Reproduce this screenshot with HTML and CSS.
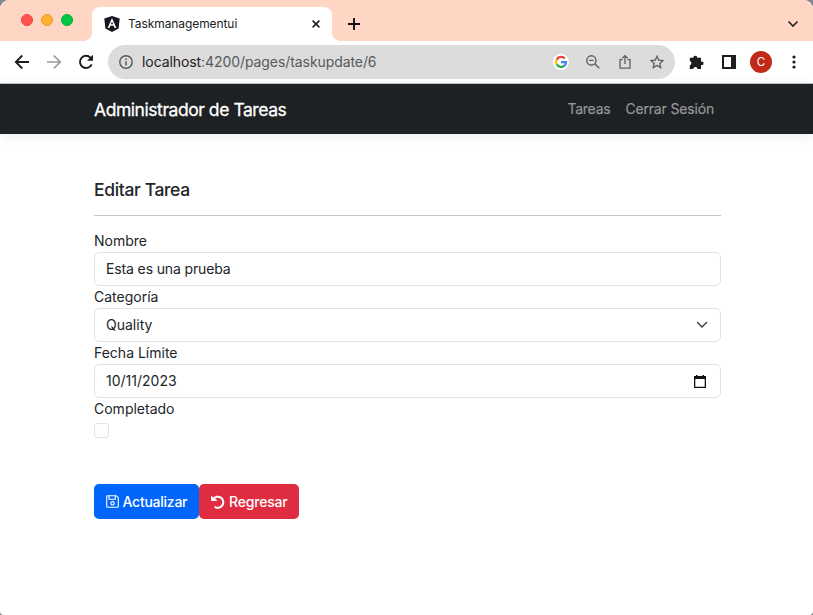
FILE: index.html
```
<!DOCTYPE html>
<html lang="es">
<head>
<meta charset="utf-8">
<title>Taskmanagementui</title>
<link rel="stylesheet" href="styles.css">
</head>
<body>
<div class="window">
  <header class="tabstrip">
    <div class="lights"><i class="light red"></i><i class="light amber"></i><i class="light green"></i></div>
    <div class="tab">
      <svg class="favicon" width="16" height="16" viewBox="0 0 16 16"><path d="M8 0l7.700 2.600-1.100 10L8 16l-6.600-3.400L.3 2.600z" fill="#14191f"/><path d="M8 2L3.600 12h1.800l.9-2.200h3.400l.9 2.200h1.800zM8 5.400l1.100 2.900H6.900z" fill="#fff" fill-rule="evenodd"/></svg>
      <span class="tab-title">Taskmanagementui</span>
      <svg class="close" width="8" height="8" viewBox="0 0 8 8"><path d="M.6.6l6.800 6.800M7.400.6L.6 7.400" stroke="#202124" stroke-width="1.600"/></svg>
    </div>
    <svg class="plus" width="12" height="12" viewBox="0 0 12 12"><path d="M6 0v12M0 6h12" stroke="#111" stroke-width="1.900"/></svg>
    <svg class="tab-menu" width="12" height="8" viewBox="0 0 12 8"><path d="M1.500 1.500L6 6l4.500-4.500" fill="none" stroke="#26211f" stroke-width="1.700"/></svg>
  </header>
  <div class="toolbar">
    <svg class="nav-icon" width="16" height="16" viewBox="0 0 16 16"><path d="M15 8H2M8.300 1.500L1.800 8l6.500 6.500" fill="none" stroke="#1c1d1f" stroke-width="1.800"/></svg>
    <svg class="nav-icon" width="16" height="16" viewBox="0 0 16 16"><path d="M1 8h13M7.700 1.500L14.200 8l-6.500 6.500" fill="none" stroke="#999" stroke-width="1.700"/></svg>
    <svg class="nav-icon" width="16" height="16" viewBox="0 0 16 16"><path d="M13.700 10.300A6.100 6.100 0 1 1 12.500 3.700L14 5.300" fill="none" stroke="#1c1d1f" stroke-width="1.900"/><path d="M15 .8v6H9z" fill="#1c1d1f"/></svg>
    <div class="address">
      <svg width="14" height="14" viewBox="0 0 14 14"><circle cx="7" cy="7" r="6.200" fill="none" stroke="#55565a" stroke-width="1.400"/><path d="M7 6.200v4.300M7 3.400v1.500" stroke="#55565a" stroke-width="1.500"/></svg>
      <span class="url">localhost<span class="path">:4200/pages/taskupdate/6</span></span>
      <svg class="google" width="16" height="16" viewBox="0 0 16 16"><circle cx="8" cy="8" r="8" fill="#fff"/><g fill="none" stroke-width="2.300"><path d="M11.800 4.600A5 5 0 0 0 3.600 5.700" stroke="#ea4335"/><path d="M3.600 5.700a5 5 0 0 0 0 4.600" stroke="#fbbc05"/><path d="M3.600 10.300a5 5 0 0 0 7.800 1.400" stroke="#34a853"/><path d="M11.400 11.700A5 5 0 0 0 12.900 8.200H8" stroke="#4285f4"/></g></svg>
      <svg class="bar-icon" width="14" height="14" viewBox="0 0 14 14"><g fill="none" stroke="#5f6063" stroke-width="1.400"><circle cx="5.400" cy="5.400" r="4.600"/><path d="M8.700 8.700l4.600 4.600M3.200 5.400h4.400"/></g></svg>
      <svg class="bar-icon" width="14" height="16" viewBox="0 0 14 16"><path d="M4.500 5.600H2v8.600h10V5.600H9.500M7 10V1.800M4.300 4.300L7 1.600l2.700 2.700" fill="none" stroke="#5f6063" stroke-width="1.300"/></svg>
      <svg class="bar-icon" width="14" height="14" viewBox="0 0 14 14"><path d="M7 1.200l1.700 3.900 4.300.4-3.200 2.900.9 4.200L7 10.400l-3.700 2.200.9-4.200L1 5.500l4.300-.4z" fill="none" stroke="#5f6063" stroke-width="1.300"/></svg>
    </div>
    <svg class="puzzle" width="15" height="15" viewBox="0 0 15 15"><path d="M4.300 2.700a2 2 0 0 1 4 0H12v3.700h.7a1.900 1.900 0 0 1 0 3.800H12V14H8.500a2.100 2.100 0 0 0-4.200 0H.8v-3.800a2.100 2.100 0 0 0 0-4.100V2.700z" fill="#1c1d1f"/></svg>
    <svg class="panel-icon" width="14" height="14" viewBox="0 0 14 14"><path d="M0 0h14v14H0zM2 2v10h7V2z" fill="#1c1d1f" fill-rule="evenodd"/></svg>
    <span class="avatar">C</span>
    <svg class="kebab" width="4" height="14" viewBox="0 0 4 14"><g fill="#1c1d1f"><circle cx="2" cy="2" r="1.600"/><circle cx="2" cy="7" r="1.600"/><circle cx="2" cy="12" r="1.600"/></g></svg>
  </div>
  <nav class="navbar">
    <a class="brand">Administrador de Tareas</a>
    <a class="nav-link tareas">Tareas</a>
    <a class="nav-link session">Cerrar Sesión</a>
  </nav>
  <main class="content">
    <h1>Editar Tarea</h1>
    <form>
      <label>Nombre</label>
      <div class="control"><span class="name-value">Esta es una prueba</span></div>
      <label>Categoría</label>
      <div class="control"><span>Quality</span><svg class="caret" width="12" height="8" viewBox="0 0 12 8"><path d="M1.500 1.500L6 6l4.500-4.500" fill="none" stroke="#343a40" stroke-width="1.400" stroke-linecap="round"/></svg></div>
      <label>Fecha Límite</label>
      <div class="control"><span>10/11/2023</span><svg class="calendar" width="12" height="13" viewBox="0 0 12 13"><path d="M2 0h1.500v1h5V0H10v1h2v12H0V1h2zM1.300 4v7.700h9.400V4z" fill="#111" fill-rule="evenodd"/></svg></div>
      <label>Completado</label>
      <div class="checkbox"></div>
      <div class="actions">
        <button type="button" class="btn primary"><svg width="13" height="13" viewBox="0 0 13 13"><g fill="none" stroke="#fff" stroke-width="1.100"><path d="M.7 1.500q0-.8.8-.8h8.700l2.100 2v8.800q0 .8-.8.8h-10q-.8 0-.8-.8zM3 .7v3.500h6.300V.7"/><circle cx="6.500" cy="8.300" r="1.700"/></g></svg><span>Actualizar</span></button>
        <button type="button" class="btn danger"><svg width="14" height="14" viewBox="0 0 14 14"><path d="M2.200 4.200A5.500 5.500 0 1 1 3.600 11.700" fill="none" stroke="#fff" stroke-width="2"/><path d="M0 .5l1.700 1.400L5.900 5v.9H.3z" fill="#fff"/></svg><span>Regresar</span></button>
      </div>
    </form>
  </main>
</div>
</body>
</html>
```
FILE: styles.css
```
* { box-sizing: border-box; }
body { margin: 0; background: #7d8794; font-family: Inter, "Liberation Sans", sans-serif; color: #212529; }
svg { display: block; flex: none; }
span, a, label, h1 { white-space: nowrap; }
.window { height: 615px; background: #fff; border-radius: 9px 9px 4px 4px; overflow: hidden; }
.tabstrip { height: 41px; background: #ffd5c3; display: flex; align-items: flex-start; }
.lights { display: flex; gap: 8px; padding: 14px 0 0 21px; width: 92px; }
.light { width: 12px; height: 12px; border-radius: 50%; border: 1px solid; }
.red { background: #ff544d; border-color: #e6473f; }
.amber { background: #ffb12e; border-color: #e19d32; }
.green { background: #00c540; border-color: #00ac38; }
.tab { position: relative; width: 240px; height: 34px; margin-top: 7px; padding: 0 12px; background: #fff; border-radius: 8px 8px 0 0; display: flex; align-items: center; }
.tab::before, .tab::after { content: ""; position: absolute; bottom: 0; width: 8px; height: 8px; }
.tab::before { left: -8px; background: radial-gradient(circle at 0 0, transparent 7.500px, #fff 8px); }
.tab::after { right: -8px; background: radial-gradient(circle at 100% 0, transparent 7.500px, #fff 8px); }
.tab-title { margin-left: 8px; padding-bottom: 1px; font-size: 12px; letter-spacing: -.08px; color: #202124; }
.close { margin-left: auto; }
.plus { margin: 18px 0 0 16px; }
.tab-menu { margin: 20px 14px 0 auto; }
.toolbar { height: 42px; display: flex; align-items: center; padding-left: 14px; background: #fff; }
.nav-icon { margin-right: 16px; }
.address { width: 567px; height: 34px; margin-left: -2px; padding: 0 11px; border-radius: 17px; background: #dcdcdc; display: flex; align-items: center; }
.url { margin-left: 9px; padding-bottom: 1px; font-size: 14px; letter-spacing: -.08px; color: #1f2022; }
.path { color: #58595c; }
.google { margin-left: auto; }
.bar-icon { margin-left: 18px; }
.google + .bar-icon { margin-left: 17px; }
.puzzle { margin-left: 14px; }
.panel-icon { margin-left: 18px; }
.avatar { width: 22px; height: 22px; margin-left: 14px; border-radius: 50%; background: #c02a17; color: #fff; font-size: 11.500px; line-height: 22px; text-align: center; }
.kebab { margin-left: 19.500px; }
.navbar { height: 51px; padding: 0 99px 0 94px; background: #1e2124; border-top: 1px solid #b9bbbc; box-shadow: 0 2px 12px rgba(0,0,0,.08); display: flex; align-items: center; }
.brand { margin-right: auto; color: #fff; font-size: 17.500px; font-weight: 400; letter-spacing: -.44px; -webkit-text-stroke: .3px #fff; }
.nav-link { padding-bottom: 1px; color: #949698; font-size: 14px; letter-spacing: -.17px; -webkit-text-stroke: .2px #949698; }
.tareas { margin-right: 15px; letter-spacing: -.25px; }
.content { width: 627px; margin: 0 0 0 94px; padding-top: 43px; }
h1 { height: 39px; margin: 0 0 14px; border-bottom: 1px solid #c4c5c6; font-size: 17.500px; line-height: 26px; font-weight: 500; letter-spacing: -.36px; }
form, .control { font-size: 14px; }
label { display: block; width: max-content; height: 22px; line-height: 21px; }
.control { height: 34px; padding: 0 11px; border: 1px solid #dee2e6; border-radius: 5px; display: flex; align-items: center; justify-content: space-between; }
.control span { padding-bottom: 2px; }
.name-value { letter-spacing: -.13px; }
.caret { margin-right: 1px; }
.calendar { margin-right: 3px; }
.checkbox { width: 15px; height: 15px; margin-top: 3px; border: 1px solid #dee2e6; border-radius: 3px; }
.actions { display: flex; margin-top: 46px; }
.btn { height: 35px; border: 0; border-radius: 5px; color: #fff; padding: 0 12px; font: 500 14px Inter, sans-serif; letter-spacing: -.25px; display: flex; align-items: center; gap: 4px; }
.primary { width: 105px; background: #0065fb; gap: 3.500px; }
.danger { width: 100px; background: #e02c40; letter-spacing: -.2px; }
```
